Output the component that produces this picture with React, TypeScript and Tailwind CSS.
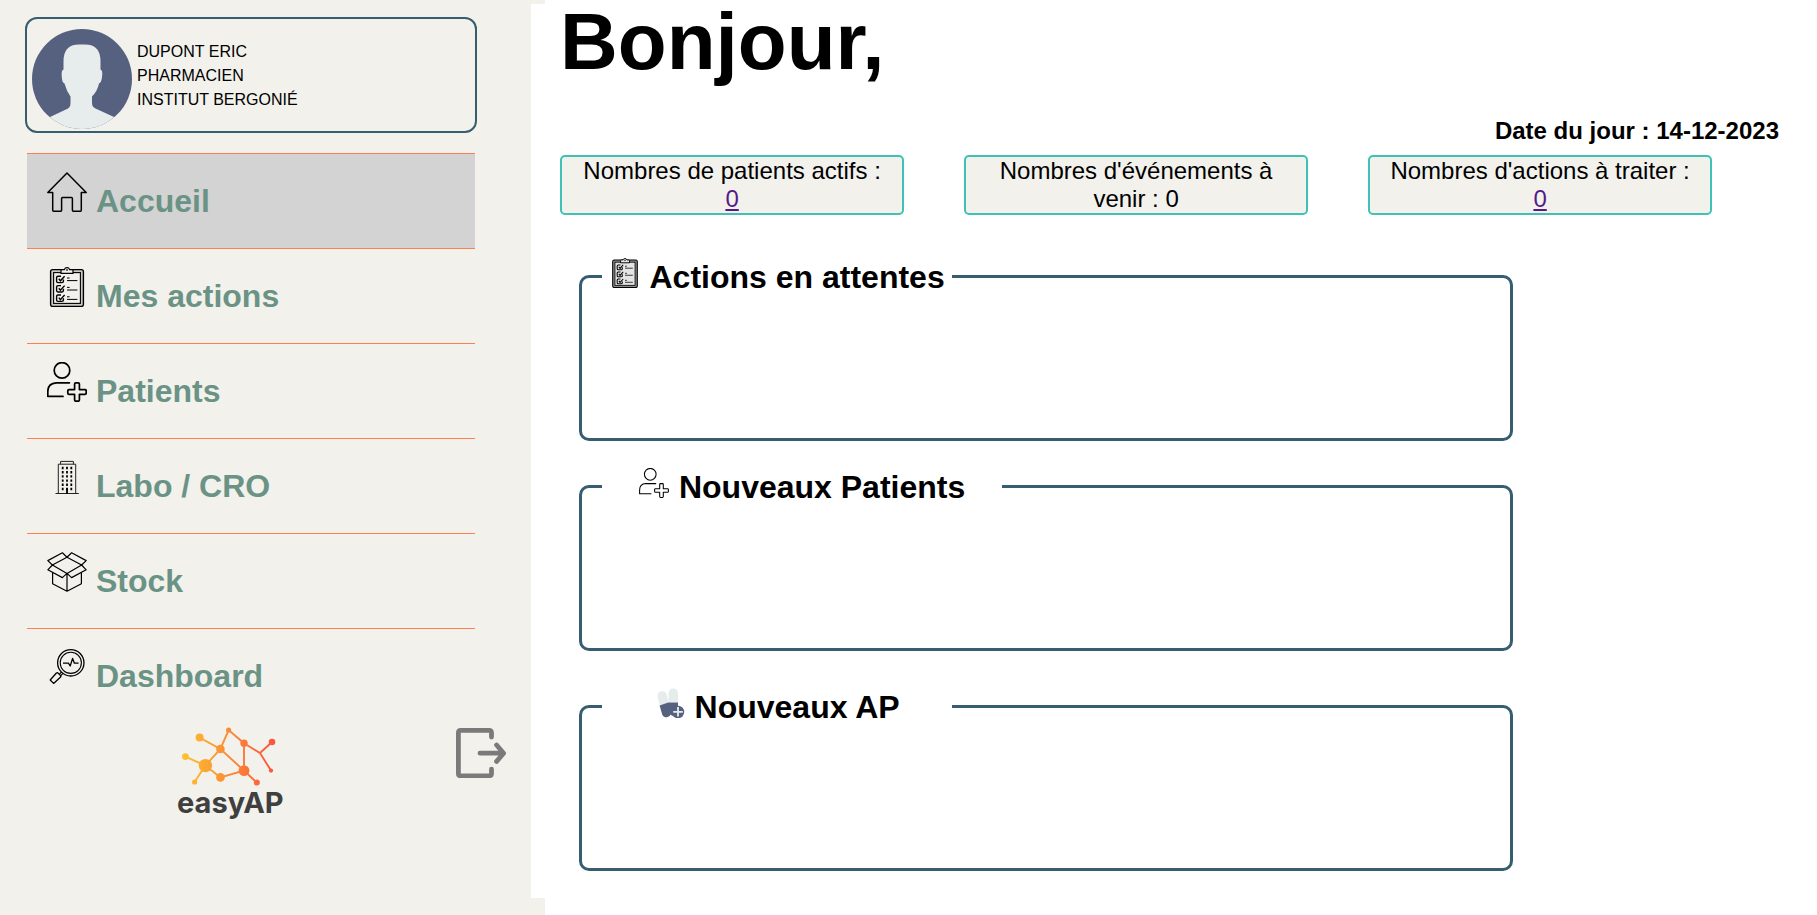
import type { ReactNode } from "react";

function HomeIcon() {
  return (
    <svg viewBox="0 0 40 40" className="size-10" fill="none" stroke="#000" strokeWidth="1.5" strokeLinejoin="round" aria-hidden="true">
      <path d="M20 1 L39.2 20.6 H34.3 V38.3 Q34.3 39.2 33.4 39.2 H26.3 Q25.4 39.2 25.4 38.3 V26.5 Q25.4 25.6 24.5 25.6 H15.5 Q14.6 25.6 14.6 26.5 V38.3 Q14.6 39.2 13.7 39.2 H6.6 Q5.7 39.2 5.7 38.3 V20.6 H0.8 Z" />
    </svg>
  );
}

interface ChecklistIconProps {
  className: string;
  board: string;
  paper: string;
}

function ChecklistIcon({ className, board, paper }: ChecklistIconProps) {
  return (
    <svg viewBox="0 0 40 40" className={className} fill="none" stroke="#000" aria-hidden="true">
      <rect x="3.6" y="2.6" width="32.8" height="36.8" rx="2" fill={board} strokeWidth="1.4" />
      <rect x="6.6" y="5.6" width="26.8" height="30.8" fill={paper} strokeWidth="1.1" />
      <path d="M14 6.4 V3.4 Q14 2.6 15 2.6 H17.4 Q18 .7 20 .7 T22.6 2.6 H25 Q26 2.6 26 3.4 V6.4 Z" fill={paper} strokeWidth="1.2" />
      <circle cx="20" cy="3" r=".5" />
      {[8.8, 18.2, 27.6].map((y) => (
        <g key={y} transform={`translate(0 ${y})`} strokeWidth="1.4">
          <path d="M16.4 3.6 V5.4 Q16.4 6.8 15 6.8 H11 Q9.6 6.8 9.6 5.4 V1.8 Q9.6 .4 11 .4 H14" />
          <path d="M11.8 3 L13.4 5 L17.6 .4" />
          <path d="M20 2.2 H22.6 M20 4.8 H30.4" strokeWidth="1" />
        </g>
      ))}
    </svg>
  );
}

function PatientIcon({ className, strokeWidth }: { className: string; strokeWidth: number }) {
  return (
    <svg viewBox="0 0 40 40" className={className} fill="none" stroke="#000" strokeWidth={strokeWidth} strokeLinecap="round" strokeLinejoin="round" aria-hidden="true">
      <circle cx="15" cy="8.4" r="7.8" />
      <path d="M22.4 20.8 H9.2 Q.8 21.4 .8 29.4 V34.4 H16" />
      <path d="M27.6 22 Q27.6 20.8 28.8 20.8 H31.2 Q32.4 20.8 32.4 22 V27.6 H38 Q39.2 27.6 39.2 28.8 V31.2 Q39.2 32.4 38 32.4 H32.4 V38 Q32.4 39.2 31.2 39.2 H28.8 Q27.6 39.2 27.6 38 V32.4 H22 Q20.8 32.4 20.8 31.2 V28.8 Q20.8 27.6 22 27.6 H27.6 Z" />
    </svg>
  );
}

function BuildingIcon() {
  return (
    <svg viewBox="0 0 40 40" className="size-10" fill="none" stroke="#222" strokeWidth="1" aria-hidden="true">
      <path d="M8.5 36.5 H31.8 M11.3 36.5 V7.2 H28.7 V36.5 M13.6 7.2 V4.4 H26.4 V7.2" />
      {[11, 15.2, 19.4, 23.6, 27.8, 32].map((y) => (
        <path key={y} d={`M14.8 ${y} H16.6 M19.1 ${y} H20.9 M23.4 ${y} H25.2`} stroke="#000" strokeWidth="2.4" />
      ))}
      <path d="M20 31 V36.5" stroke="#000" strokeWidth="1.8" />
    </svg>
  );
}

function BoxIcon() {
  return (
    <svg viewBox="0 0 40 40" className="size-10" fill="none" stroke="#000" strokeWidth="1.2" strokeLinejoin="round" aria-hidden="true">
      <path d="M20 5.2 L5.4 13 L.8 8.6 L15.4 .8 Z L34.6 13 L39.2 8.6 L24.6 .8 Z" />
      <path d="M5.4 13 L20 21.4 L15.4 25.6 L.8 17.8 Z M34.6 13 L20 21.4 L24.6 25.6 L39.2 17.8 Z" />
      <path d="M5.6 20.6 V31.8 L20 39.2 L34.4 31.8 V20.6 M20 21.4 V39.2" />
    </svg>
  );
}

function DashboardIcon() {
  return (
    <svg viewBox="0 0 40 40" className="size-10" fill="none" stroke="#000" strokeWidth="1.3" strokeLinejoin="round" aria-hidden="true">
      <circle cx="23.8" cy="15.8" r="13.2" />
      <circle cx="23.8" cy="15.8" r="10.6" strokeWidth="1.1" />
      <path d="M16 16.2 H21.4 L23.2 19 L25.6 11.4 L27.4 16.2 H31.6" />
      <path d="M14.6 25 L12.4 27.2 M16 26.4 L13.8 28.6" strokeWidth="1.1" />
      <path d="M10.6 25.6 L14 29 L13.6 30 L6.6 36.4 L3.2 33 L9.4 26 Z" />
    </svg>
  );
}

function MedicineIcon() {
  return (
    <svg viewBox="0 0 30 30" className="size-[30px]" aria-hidden="true">
      <path d="M2.6 9 Q2.2 3.6 6.8 3.2 Q11.4 3 12 8 L13.4 14.6 L5 17.4 Z" fill="#e5edec" />
      <path d="M13.6 5 Q13.8 .6 18.4 .4 Q23 .6 23 5 V14.2 H13.6 Z" fill="#e5edec" />
      <path d="M4.6 17.4 L13.2 14.4 H23 V21 Q18 22 18 28 Q16 27.4 15.4 26.6 Q15 28.8 11.6 29.2 Q8.2 29.2 7.2 26.4 Z" fill="#56607f" />
      <circle cx="23" cy="24" r="6.2" fill="#56607f" />
      <path d="M23 19 V28.6 M18.2 23.8 H27.8" stroke="#e5edec" strokeWidth="1.8" />
    </svg>
  );
}

function Avatar() {
  return (
    <svg viewBox="0 0 100 100" className="size-[100px]" aria-hidden="true">
      <clipPath id="avatar-clip">
        <circle cx="50" cy="50" r="50" />
      </clipPath>
      <g clipPath="url(#avatar-clip)">
        <rect width="100" height="100" fill="#56607f" />
        <path d="M31.5 33 Q31 15.4 47 15.4 H53 Q69 15.4 68.5 33 V40.5 Q71 41 70 48 Q69.5 53.5 67 54.5 Q65.5 62 60 67.5 V74 Q60 78 63.5 79.5 L82 88 V100 H18 V88 L36 79.5 Q38.5 78 38.5 74 V67.5 Q34.5 62 32.5 54.5 Q30 53.5 29.8 48 Q29 41 31.5 40.5 Z" fill="#e7edec" />
      </g>
    </svg>
  );
}

function LogoutIcon() {
  return (
    <svg viewBox="0 0 50 50" className="size-[50px]" fill="none" stroke="#7a7a7a" strokeWidth="4.8" strokeLinecap="round" strokeLinejoin="round" aria-hidden="true">
      <path d="M35.5 9 V4.8 Q35.5 2.4 33 2.4 H4.8 Q2.4 2.4 2.4 4.8 V45.4 Q2.4 47.8 4.8 47.8 H33 Q35.5 47.8 35.5 45.4 V41.2" />
      <path d="M24 25.2 H46 M40.6 17 L47.6 25.2 L40.6 33.4" />
    </svg>
  );
}

function LogoMark() {
  return (
    <svg viewBox="0 0 96 60" className="h-[60px] w-24" aria-hidden="true">
      <defs>
        <linearGradient id="logo-fill" gradientUnits="userSpaceOnUse" x1="0" y1="0" x2="96" y2="0">
          <stop offset="0" stopColor="#fdc22e" />
          <stop offset=".5" stopColor="#fb8a35" />
          <stop offset="1" stopColor="#fb4f42" />
        </linearGradient>
      </defs>
      <path d="M3.4 30.6 L23.4 39.6 L38.4 23 L17.6 11.6 M38.4 23 L46.6 4 L62 17.2 V44.6 L38.4 23 M23.4 39.6 L12.6 56 M23.4 39.6 L38.4 51.4 L62 44.6 L74.8 56.6 M62 17.2 L78 27 L90 16 M78 27 L89 44.6" fill="none" stroke="url(#logo-fill)" strokeWidth="1.9" />
      <g fill="url(#logo-fill)">
        <circle cx="3.4" cy="30.6" r="3.4" />
        <circle cx="17.6" cy="11.6" r="4" />
        <circle cx="46.6" cy="4" r="2.6" />
        <circle cx="38.4" cy="23" r="4.3" />
        <circle cx="62" cy="17.2" r="3.7" />
        <circle cx="90" cy="16" r="3.3" />
        <circle cx="89" cy="44.6" r="2.1" />
        <circle cx="62" cy="44.6" r="5.4" />
        <circle cx="74.8" cy="56.6" r="3" />
        <circle cx="38.4" cy="51.4" r="4.3" />
        <circle cx="12.6" cy="56" r="2.6" />
        <circle cx="23.4" cy="39.6" r="6.7" />
      </g>
    </svg>
  );
}

const NAV_ITEMS = [
  { label: "Accueil", icon: <HomeIcon />, active: true },
  {
    label: "Mes actions",
    icon: <ChecklistIcon className="size-10" board="#c9c9c5" paper="#f2f1ec" />,
  },
  { label: "Patients", icon: <PatientIcon className="size-10" strokeWidth={1.7} /> },
  { label: "Labo / CRO", icon: <BuildingIcon /> },
  { label: "Stock", icon: <BoxIcon /> },
  { label: "Dashboard", icon: <DashboardIcon /> },
];

function Sidebar() {
  return (
    <aside className="w-[30%] shrink-0 bg-[#f2f1ec] pt-[17px]">
      <div className="ml-[25px] mr-[68px] flex h-[116px] items-start gap-[5px] rounded-[12px] border-2 border-[#375d70] px-[5px] pt-[10px]">
        <Avatar />
        <p className="pt-[11px] text-base leading-6">
          DUPONT ERIC
          <br />
          PHARMACIEN
          <br />
          INSTITUT BERGONIÉ
        </p>
      </div>
      <nav className="ml-[27px] mr-[70px] mt-5">
        {NAV_ITEMS.map((item) => (
          <a
            key={item.label}
            href="#"
            className={`flex h-[95px] items-start gap-[9px] border-t border-[#ff7f50] pl-5 pt-[18px] ${
              item.active ? "bg-[#d3d3d3]" : ""
            }`}
          >
            {item.icon}
            <span className="pt-[11px] text-[32px] font-bold leading-9 text-[#6b9385]">
              {item.label}
            </span>
          </a>
        ))}
      </nav>
      <div className="ml-[177px] mr-[39px] flex items-start justify-between">
        <div className="flex flex-col items-center pt-[3px]">
          <LogoMark />
          <span className="font-['Inter',sans-serif] text-[29px] font-bold leading-[34px] text-[#3f3f3f]">
            easyAP
          </span>
        </div>
        <button type="button" aria-label="Déconnexion" className="mt-[5px]">
          <LogoutIcon />
        </button>
      </div>
    </aside>
  );
}

function Stat({ children }: { children: ReactNode }) {
  return (
    <div className="w-[344px] rounded-[5px] border-2 border-[#3fc1b7] bg-[#f2f1ec] px-5 text-center text-2xl leading-7">
      {children}
    </div>
  );
}

interface PanelProps {
  title: string;
  icon: ReactNode;
  legendClass: string;
}

function Panel({ title, icon, legendClass }: PanelProps) {
  return (
    <fieldset className="h-[183px] rounded-[10px] border-[3px] border-[#375d70] px-5">
      <legend className={`${legendClass} h-[37px]`}>
        <span className="flex items-start justify-center gap-[10px] text-[32px] font-bold leading-[39px]">
          {icon}
          {title}
        </span>
      </legend>
    </fieldset>
  );
}

export default function App() {
  return (
    <div className="flex min-h-screen items-stretch bg-white font-['Liberation_Sans',Arial,sans-serif] text-black">
      <Sidebar />
      <main className="-ml-[14px] mt-1 flex-1 self-start bg-white pb-[27px] pl-[29px]">
        <h1 className="text-[80px] font-bold leading-[76px]">Bonjour,</h1>
        <p className="mt-[37px] pr-[38px] text-right text-2xl font-bold leading-7">
          Date du jour : 14-12-2023
        </p>
        <div className="mt-[10px] flex gap-[60px]">
          <Stat>
            Nombres de patients actifs :{" "}
            <a href="#" className="text-[#551a8b] underline">0</a>
          </Stat>
          <Stat>Nombres d'événements à venir : 0</Stat>
          <Stat>
            Nombres d'actions à traiter :{" "}
            <a href="#" className="text-[#551a8b] underline">0</a>
          </Stat>
        </div>
        <div className="ml-[19px] mr-[304px] mt-[43px]">
          <Panel
            title="Actions en attentes"
            icon={<ChecklistIcon className="size-[30px]" board="#8c8c8c" paper="#e4e4e4" />}
            legendClass="w-[350px]"
          />
          <div className="mt-[27px]">
            <Panel
              title="Nouveaux Patients"
              icon={<PatientIcon className="size-[30px]" strokeWidth={1.4} />}
              legendClass="w-[400px]"
            />
          </div>
          <div className="mt-[37px]">
            <Panel title="Nouveaux AP" icon={<MedicineIcon />} legendClass="w-[350px]" />
          </div>
        </div>
      </main>
    </div>
  );
}
